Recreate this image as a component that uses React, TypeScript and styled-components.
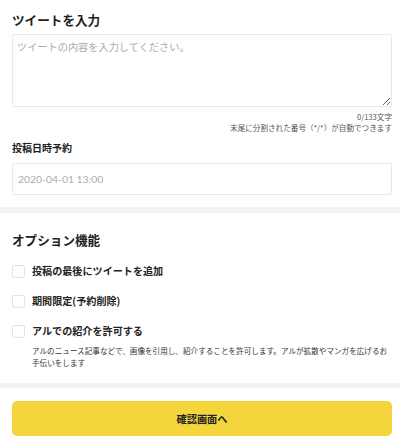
import React from "react";
import styled, { createGlobalStyle } from "styled-components";

const Global = createGlobalStyle`
  html, body { margin: 0; padding: 0; background: #fff; }
  body { font-family: "Noto Sans CJK JP", "Noto Sans", sans-serif; color: #222; }
  * { box-sizing: border-box; }
`;

const Page = styled.div`
  width: 400px;
  background: #fff;
`;

const Section = styled.section<{ $top?: number; $bottom?: number }>`
  padding: ${(p) => p.$top ?? 0}px 8px ${(p) => p.$bottom ?? 0}px 12px;
  display: flex;
  flex-direction: column;
`;

const Divider = styled.div<{ $h: number }>`
  height: ${(p) => p.$h}px;
  background: #f3f2f0;
`;

const Heading = styled.h2<{ $mt?: number }>`
  margin: ${(p) => p.$mt ?? 0}px 0 0;
  font-size: 12.6px;
  line-height: 18px;
  font-weight: 700;
  color: #222;
`;

const Label = styled.h3<{ $mt?: number }>`
  margin: ${(p) => p.$mt ?? 0}px 0 0;
  font-size: 10px;
  line-height: 14px;
  font-weight: 700;
  color: #222;
`;

const TextArea = styled.textarea`
  margin-top: 5px;
  width: 100%;
  height: 73px;
  border: 1px solid #e9e9e9;
  border-radius: 2px;
  padding: 5px 4px;
  font-family: "Noto Sans CJK JP", sans-serif;
  font-size: 10.2px;
  line-height: 14px;
  color: #222;
  outline: none;
  display: block;
  &::placeholder { color: #a7adb9; }
`;

const SmallNote = styled.div<{ $mt?: number }>`
  margin-top: ${(p) => p.$mt ?? 0}px;
  font-size: 7.6px;
  line-height: 11px;
  text-align: right;
  color: #555;
`;

const Input = styled.input`
  margin-top: 8px;
  width: 100%;
  height: 32px;
  border: 1px solid #e9e9e9;
  border-radius: 2px;
  padding: 0 5px;
  font-family: "Lato", "Noto Sans CJK JP", sans-serif;
  font-size: 10.4px;
  color: #222;
  outline: none;
  &::placeholder { color: #a7adb9; }
`;

const OptionList = styled.div`
  margin-top: 15px;
  display: flex;
  flex-direction: column;
  gap: 16px;
`;

const OptionRow = styled.label`
  display: flex;
  align-items: center;
  gap: 7px;
  height: 14px;
  cursor: pointer;
`;

const Box = styled.span`
  width: 13px;
  height: 13px;
  border: 1px solid #e3e3e3;
  border-radius: 2px;
  background: #fff;
  flex: none;
`;

const OptionText = styled.span`
  font-size: 10.1px;
  line-height: 14px;
  font-weight: 700;
  color: #222;
`;

const Description = styled.p`
  margin: 7px 0 0 20px;
  font-size: 7.6px;
  line-height: 12px;
  color: #333;
`;

const Button = styled.button`
  height: 35px;
  width: 100%;
  border: none;
  border-radius: 5px;
  background: #f4d63c;
  font-family: "Noto Sans CJK JP", sans-serif;
  font-size: 10.2px;
  font-weight: 700;
  color: #222;
  cursor: pointer;
`;

const options = ["投稿の最後にツイートを追加", "期間限定(予約削除)", "アルでの紹介を許可する"];

export default function App() {
  return (
    <Page>
      <Global />
      <Section $bottom={12}>
        <Heading $mt={11}>ツイートを入力</Heading>
        <TextArea placeholder="ツイートの内容を入力してください。" />
        <SmallNote $mt={4}>0/133文字</SmallNote>
        <SmallNote>末尾に分割された番号（*/*）が自動でつきます</SmallNote>
        <Label $mt={8}>投稿日時予約</Label>
        <Input placeholder="2020-04-01 13:00" />
      </Section>
      <Divider $h={6} />
      <Section $top={18} $bottom={14}>
        <Heading>オプション機能</Heading>
        <OptionList>
          {options.map((o) => (
            <OptionRow key={o}>
              <Box />
              <OptionText>{o}</OptionText>
            </OptionRow>
          ))}
        </OptionList>
        <Description>
          アルのニュース記事などで、画像を引用し、紹介することを許可します。アルが拡散やマンガを広げるお手伝いをします
        </Description>
      </Section>
      <Divider $h={5} />
      <Section $top={13} $bottom={12}>
        <Button>確認画面へ</Button>
      </Section>
    </Page>
  );
}
